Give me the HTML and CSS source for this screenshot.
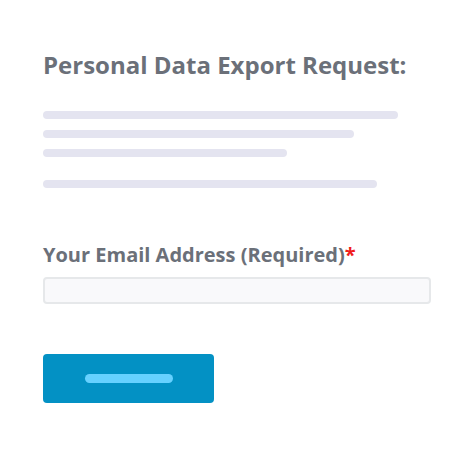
FILE: index.html
```html
<!DOCTYPE html>
<html>
<head>
<meta charset="utf-8">
<link rel="stylesheet" href="styles.css">
</head>
<body>
<div class="form">
  <h1 class="title">Personal Data Export Request:</h1>
  <div class="lines">
    <div class="line" style="width:355px"></div>
    <div class="line" style="width:311px"></div>
    <div class="line" style="width:244px"></div>
    <div class="line gap" style="width:334px"></div>
  </div>
  <label class="label">Your Email Address (Required)<span class="req">*</span></label>
  <div class="input"></div>
  <div class="button"><div class="button-bar"></div></div>
</div>
</body>
</html>
```
FILE: styles.css
```css
html, body { margin: 0; padding: 0; background: #fff; }
body { font-family: "Open Sans", sans-serif; }
.form { padding: 48px 43px 0 43px; display: flex; flex-direction: column; align-items: flex-start; }
.title { margin: 0; font-size: 24px; font-weight: 700; color: #6b7079; line-height: 34px; }
.lines { margin-top: 29px; display: flex; flex-direction: column; gap: 11px; }
.line { height: 8px; border-radius: 4px; background: #e4e4f0; }
.line.gap { margin-top: 12px; }
.label { margin-top: 53px; font-size: 20px; font-weight: 700; color: #6b7079; line-height: 28px; }
.req { color: #f01c1c; }
.input { margin-top: 8px; width: 384px; height: 23px; border: 2px solid #e6e8ea; border-radius: 4px; background: #f9f9fb; }
.button { margin-top: 50px; width: 171px; height: 49px; border-radius: 4px; background: #0391c4; display: flex; align-items: center; justify-content: center; }
.button-bar { width: 88px; height: 9px; border-radius: 5px; background: #66d1ff; }
```
